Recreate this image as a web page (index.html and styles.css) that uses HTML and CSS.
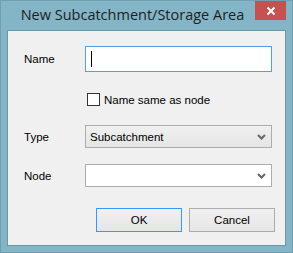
FILE: index.html
```html
<!DOCTYPE html>
<html lang="en">
<head>
<meta charset="UTF-8">
<title>New Subcatchment/Storage Area</title>
<link rel="stylesheet" href="styles.css">
</head>
<body>
<div class="ventana">
  <div class="titulo">
    <span class="titulo-texto">New Subcatchment/Storage Area</span>
    <div class="cerrar">
      <svg width="10" height="10" viewBox="0 0 10 10"><path d="M1.5 1.5 L8.5 8.5 M8.5 1.5 L1.5 8.5" stroke="#fff" stroke-width="2"/></svg>
    </div>
  </div>

  <div class="cliente">
    <div class="fila fila-nombre">
      <span class="etiqueta">Name</span>
      <div class="campo"><span class="cursor"></span></div>
    </div>

    <div class="fila fila-check">
      <span class="caja"></span>
      <span>Name same as node</span>
    </div>

    <div class="fila fila-tipo">
      <span class="etiqueta">Type</span>
      <div class="combo gris">
        <span>Subcatchment</span>
        <svg width="9" height="6" viewBox="0 0 9 6"><path d="M1 1 L4.5 4.5 L8 1" fill="none" stroke="#666" stroke-width="2"/></svg>
      </div>
    </div>

    <div class="fila fila-nodo">
      <span class="etiqueta">Node</span>
      <div class="combo">
        <span></span>
        <svg width="9" height="6" viewBox="0 0 9 6"><path d="M1 1 L4.5 4.5 L8 1" fill="none" stroke="#666" stroke-width="2"/></svg>
      </div>
    </div>

    <div class="botones">
      <button class="boton activo">OK</button>
      <button class="boton">Cancel</button>
    </div>
  </div>
</div>
</body>
</html>
```

FILE: styles.css
```css
body {
  margin: 0;
  font-family: "Liberation Sans", Arial, sans-serif;
  font-size: 11.5px;
  color: #000;
}

.ventana {
  width: 293px;
  height: 253px;
  box-sizing: border-box;
  background: #83b5c7;
  border: 1px solid #6f9fb1;
  display: flex;
  flex-direction: column;
}

.titulo {
  height: 29px;
  display: flex;
  align-items: flex-start;
}

.titulo-texto {
  flex: 1;
  text-align: center;
  padding-left: 9px;
  padding-top: 4px;
  font-family: "Open Sans", sans-serif;
  font-size: 14.5px;
  color: #1e1e1e;
}

.cerrar {
  width: 31px;
  height: 19px;
  margin-right: 6px;
  background: #c75050;
  display: flex;
  align-items: center;
  justify-content: center;
}

.cliente {
  flex: 1;
  margin: 0 6px 6px 6px;
  border: 1px solid #6c97a7;
  background: #f0f0f0;
  padding: 15px 0 0 16px;
}

.fila {
  display: flex;
  align-items: center;
}

.etiqueta {
  width: 61px;
}

.campo {
  width: 187px;
  height: 26px;
  box-sizing: border-box;
  border: 1px solid #569de5;
  background: #fff;
  display: flex;
  align-items: center;
  padding-left: 5px;
}

.cursor {
  width: 1px;
  height: 16px;
  background: #000;
}

.fila-check {
  margin-top: 21px;
  padding-left: 63px;
  gap: 4px;
}

.caja {
  width: 13px;
  height: 13px;
  box-sizing: border-box;
  border: 1px solid #333;
  background: #fff;
}

.fila-tipo {
  margin-top: 19px;
}

.fila-nodo {
  margin-top: 16px;
}

.combo {
  width: 187px;
  height: 23px;
  box-sizing: border-box;
  border: 1px solid #acacac;
  background: #fff;
  display: flex;
  align-items: center;
  justify-content: space-between;
  padding: 0 5px 0 4px;
}

.combo.gris {
  background: linear-gradient(#f0f0f0, #e5e5e5);
}

.botones {
  display: flex;
  gap: 7px;
  margin-top: 21px;
  padding-left: 72px;
}

.boton {
  width: 86px;
  height: 24px;
  font-family: inherit;
  font-size: 11.5px;
  background: linear-gradient(#f0f0f0, #e5e5e5);
  border: 1px solid #acacac;
  border-radius: 0;
  padding: 0;
}

.boton.activo {
  border: 1px solid #3399ff;
}
```
